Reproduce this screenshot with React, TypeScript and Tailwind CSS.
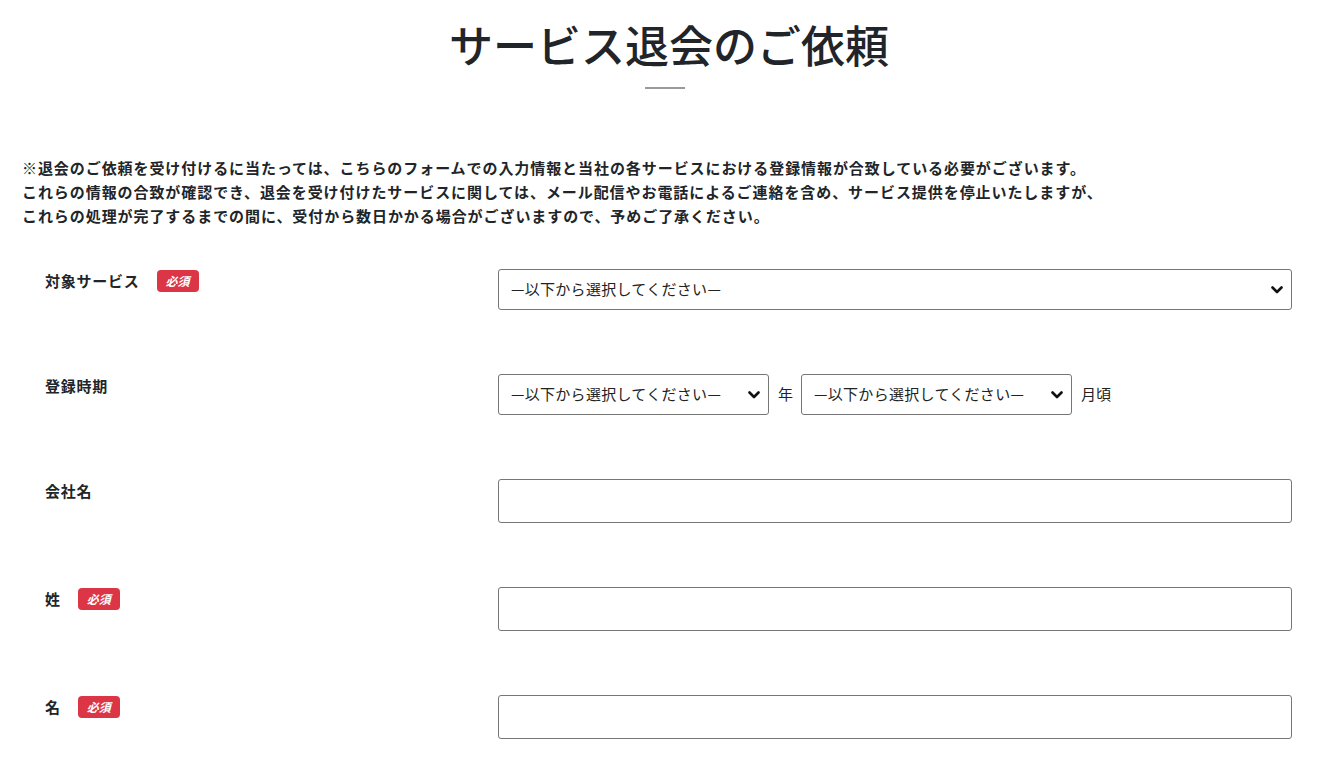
import React from "react";

const FONT = { fontFamily: '"Noto Sans CJK JP", "Noto Sans", sans-serif' };

function Badge() {
  return (
    <span className="ml-[17px] inline-flex h-[22px] w-[42px] items-center justify-center rounded-[4px] bg-[#dc3545] text-[12px] font-bold italic leading-none tracking-normal text-white">
      必須
    </span>
  );
}

function Chevron() {
  return (
    <svg
      className="pointer-events-none absolute right-[9px] top-1/2 -translate-y-1/2"
      width="12"
      height="8"
      viewBox="0 0 12 8"
      fill="none"
    >
      <path d="M1.5 1.5 L6 6 L10.5 1.5" stroke="#111" strokeWidth="2.6" strokeLinecap="round" strokeLinejoin="round" />
    </svg>
  );
}

function Select({ className }: { className: string }) {
  return (
    <div className={"relative " + className}>
      <select
        className="h-[41px] w-full appearance-none rounded-[3px] border border-[#767676] bg-white pl-3 pr-8 text-[15px] tracking-[0.3px] text-[#222] outline-none"
        style={FONT}
        defaultValue=""
      >
        <option value="">—以下から選択してください—</option>
      </select>
      <Chevron />
    </div>
  );
}

function Input() {
  return (
    <input
      type="text"
      className="h-[44px] w-full rounded-[3px] border border-[#767676] bg-white px-3 text-[15px] outline-none"
      style={FONT}
    />
  );
}

function Row({ label, required, children }: { label: string; required?: boolean; children: React.ReactNode }) {
  return (
    <div className="grid grid-cols-[453px_794px]">
      <div className="flex h-[24px] items-center text-[15px] font-bold tracking-[0.05em]">
        <span>{label}</span>
        {required && <Badge />}
      </div>
      <div>{children}</div>
    </div>
  );
}

export default function App() {
  return (
    <div className="min-h-[773px] w-[1330px] bg-white text-[#212529]" style={FONT}>
      <h1 className="pt-[14px] pl-[8px] text-center text-[44px] font-medium leading-[60px]">サービス退会のご依頼</h1>
      <div className="mx-auto mt-[13px] h-[2px] w-[40px] bg-[#999]" />
      <div className="mt-[67px] px-[22px] text-[15px] font-bold leading-[24px] tracking-[0.93px]">
        <p>※退会のご依頼を受け付けるに当たっては、こちらのフォームでの入力情報と当社の各サービスにおける登録情報が合致している必要がございます。</p>
        <p>これらの情報の合致が確認でき、退会を受け付けたサービスに関しては、メール配信やお電話によるご連絡を含め、サービス提供を停止いたしますが、</p>
        <p>これらの処理が完了するまでの間に、受付から数日かかる場合がございますので、予めご了承ください。</p>
      </div>
      <div className="mt-[41px] flex flex-col gap-[64px] pl-[45px]">
        <Row label="対象サービス" required>
          <Select className="w-full" />
        </Row>
        <Row label="登録時期">
          <div className="flex items-center text-[15px] text-[#222]">
            <Select className="w-[271px]" />
            <span className="ml-[9px] mr-[8px]">年</span>
            <Select className="w-[271px]" />
            <span className="ml-[9px]">月頃</span>
          </div>
        </Row>
        <Row label="会社名">
          <Input />
        </Row>
        <Row label="姓" required>
          <Input />
        </Row>
        <Row label="名" required>
          <Input />
        </Row>
      </div>
    </div>
  );
}
